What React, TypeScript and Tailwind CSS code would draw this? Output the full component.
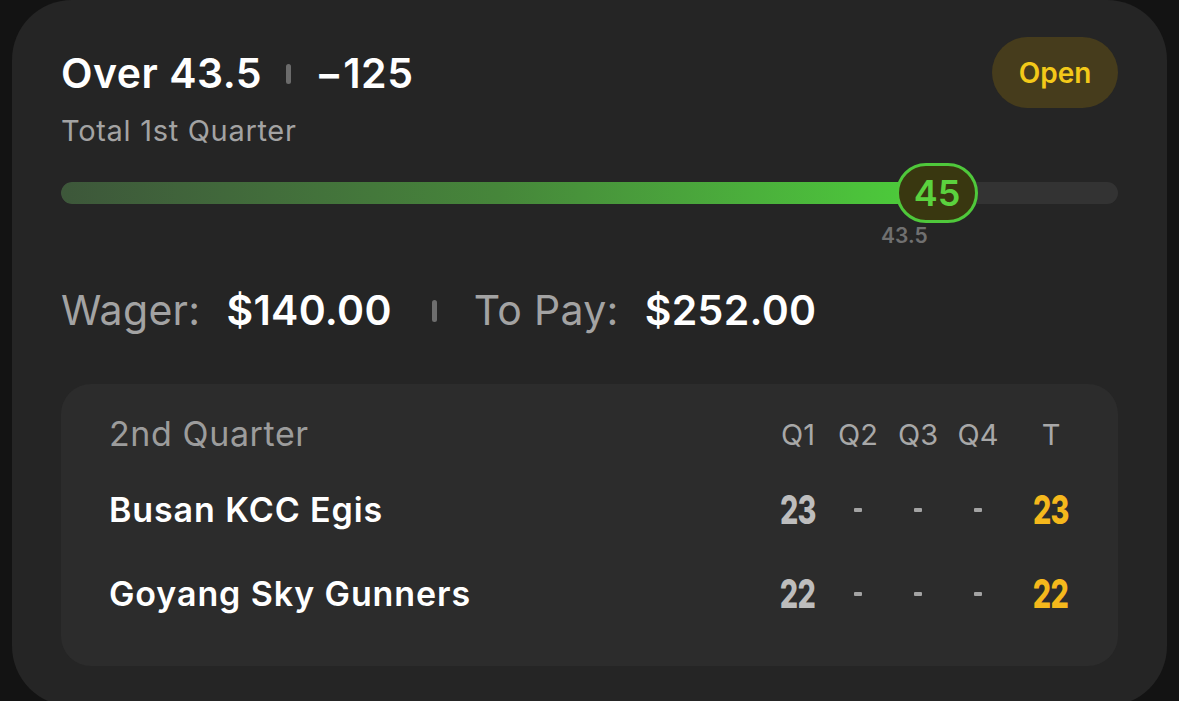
import React from 'react';

const quarters = ['Q1', 'Q2', 'Q3', 'Q4'];

const teams = [
  { name: 'Busan KCC Egis', q1: '23', total: '23' },
  { name: 'Goyang Sky Gunners', q1: '22', total: '22' },
];

function Score({ value, color }: { value: string; color: string }) {
  return (
    <span
      className={`inline-block origin-center scale-x-[0.72] text-[40px] leading-none font-extrabold tracking-[-1px] ${color}`}
    >
      {value}
    </span>
  );
}

function Dash() {
  return <span className="block h-[4px] w-[8px] rounded-[1px] bg-[#a3a3a3]" />;
}

export default function App() {
  return (
    <div
      className="h-[701px] w-[1179px] overflow-hidden bg-[#131313]"
      style={{ fontFamily: 'Inter, "Noto Sans", sans-serif' }}
    >
      <div className="ml-[12px] flex h-[706px] w-[1155px] flex-col rounded-[60px] bg-[#252525] px-[49px] pt-[37px]">
        {/* Header */}
        <div className="flex items-start justify-between">
          <div className="mt-[16px]">
            <div className="flex items-center text-[41px] leading-none font-semibold tracking-[0.5px] text-white">
              <span>Over 43.5</span>
              <span className="mx-[24px] h-[20px] w-[5px] rounded-full bg-[#6b6b6b]" />
              <span>−125</span>
            </div>
            <div className="mt-[22px] text-[29px] leading-none tracking-[0.7px] text-[#a3a3a3]">Total 1st Quarter</div>
          </div>
          <div className="flex h-[71px] w-[126px] items-center justify-center rounded-full bg-[#463c1c] text-[28px] font-semibold text-[#f3c919]">
            Open
          </div>
        </div>

        {/* Progress */}
        <div className="relative mt-[18px] flex h-[60px] items-center">
          <div className="h-[22px] w-full overflow-hidden rounded-full bg-[#333333]">
            <div className="h-full w-[875px] rounded-full bg-gradient-to-r from-[#3d573a] via-[#46863a] to-[#4ccf3a]" />
          </div>
          <div className="absolute top-0 left-[835px] flex h-[60px] w-[82px] items-center justify-center rounded-full border-[3px] border-[#4fc83b] bg-[#393710] text-[36px] leading-none font-semibold text-[#5bd23e]">
            45
          </div>
          <div className="absolute top-[62px] left-[820px] text-[21px] leading-none font-semibold text-[#707070]">
            43.5
          </div>
        </div>

        {/* Wager */}
        <div className="mt-[67px] flex items-center text-[41px] leading-none tracking-[0.3px]">
          <span className="text-[#a3a3a3]">Wager:</span>
          <span className="ml-[26px] font-semibold text-white">$140.00</span>
          <span className="mr-[37px] ml-[40px] h-[22px] w-[5px] rounded-full bg-[#6e6e6e]" />
          <span className="text-[#a3a3a3]">To Pay:</span>
          <span className="ml-[26px] font-semibold text-white">$252.00</span>
        </div>

        {/* Scoreboard */}
        <div className="mt-[53px] rounded-[30px] bg-[#2c2c2c] pt-[30px] pr-[37px] pb-[30px] pl-[48px]">
          <div className="flex h-[40px] items-center">
            <div className="flex-1 text-[34px] leading-none tracking-[0.6px] text-[#9c9c9c]">2nd Quarter</div>
            {quarters.map((q) => (
              <div key={q} className="w-[60px] text-center text-[29px] leading-none text-[#a8a8a8]">
                {q}
              </div>
            ))}
            <div className="ml-[13px] w-[60px] text-center text-[29px] leading-none text-[#a8a8a8]">T</div>
          </div>
          <div className="mt-[14px]">
            {teams.map((t) => (
              <div key={t.name} className="flex h-[84px] items-center">
                <div className="flex-1 text-[34px] leading-none font-semibold tracking-[0.9px] text-white">{t.name}</div>
                <div className="flex w-[60px] justify-center">
                  <Score value={t.q1} color="text-[#bdbdbd]" />
                </div>
                {[0, 1, 2].map((i) => (
                  <div key={i} className="flex w-[60px] justify-center">
                    <Dash />
                  </div>
                ))}
                <div className="ml-[13px] flex w-[60px] justify-center">
                  <Score value={t.total} color="text-[#f5b81c]" />
                </div>
              </div>
            ))}
          </div>
        </div>
      </div>
    </div>
  );
}
